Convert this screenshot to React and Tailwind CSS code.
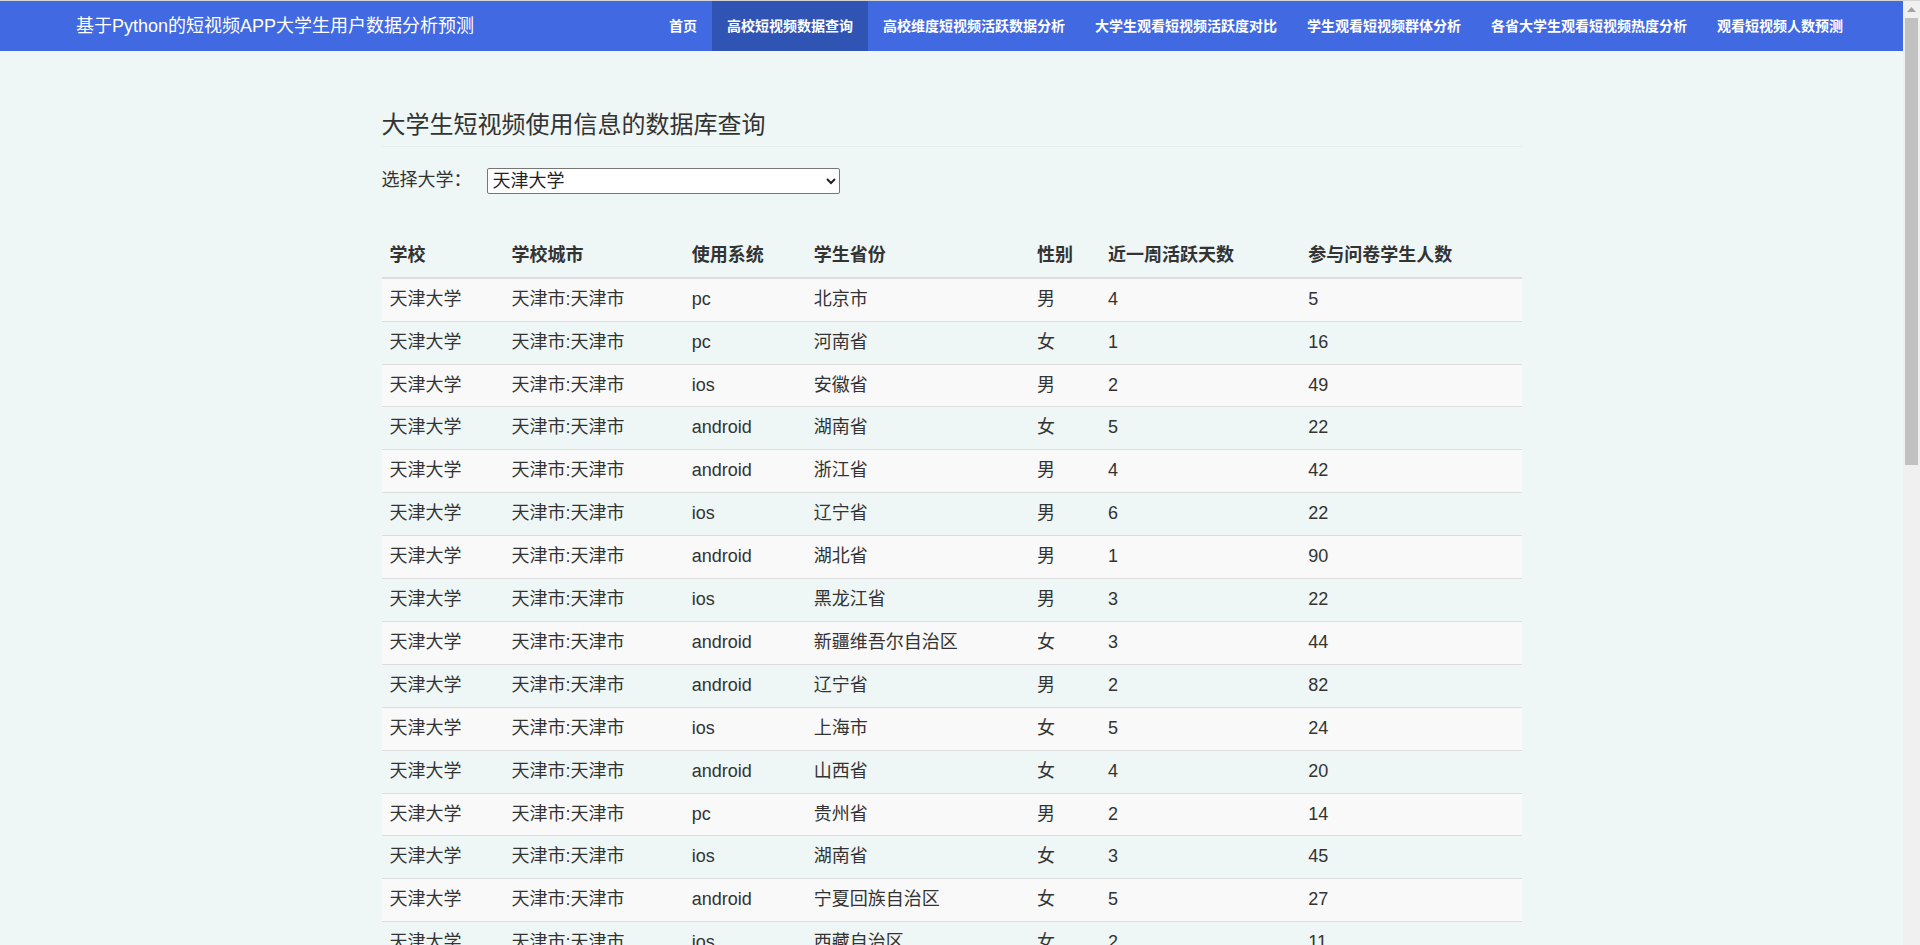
import React from 'react';

const navItems = [
  '首页',
  '高校短视频数据查询',
  '高校维度短视频活跃数据分析',
  '大学生观看短视频活跃度对比',
  '学生观看短视频群体分析',
  '各省大学生观看短视频热度分析',
  '观看短视频人数预测',
];

const rows = [
  ['pc', '北京市', '男', 4, 5],
  ['pc', '河南省', '女', 1, 16],
  ['ios', '安徽省', '男', 2, 49],
  ['android', '湖南省', '女', 5, 22],
  ['android', '浙江省', '男', 4, 42],
  ['ios', '辽宁省', '男', 6, 22],
  ['android', '湖北省', '男', 1, 90],
  ['ios', '黑龙江省', '男', 3, 22],
  ['android', '新疆维吾尔自治区', '女', 3, 44],
  ['android', '辽宁省', '男', 2, 82],
  ['ios', '上海市', '女', 5, 24],
  ['android', '山西省', '女', 4, 20],
  ['pc', '贵州省', '男', 2, 14],
  ['ios', '湖南省', '女', 3, 45],
  ['android', '宁夏回族自治区', '女', 5, 27],
  ['ios', '西藏自治区', '女', 2, 11],
];

const headers = [
  ['学校', 'w-[122px]'],
  ['学校城市', 'w-[180px]'],
  ['使用系统', 'w-[122px]'],
  ['学生省份', 'w-[223px]'],
  ['性别', 'w-[71px]'],
  ['近一周活跃天数', 'w-[200px]'],
  ['参与问卷学生人数', 'w-[221px]'],
];

function Navbar() {
  return (
    <nav className="flex h-[50px] items-stretch justify-between bg-[#4169e1] pl-[61px] pr-[45px] text-white">
      <a className="px-[15px] py-[15px] text-[18px] leading-[20px]">基于Python的短视频APP大学生用户数据分析预测</a>
      <ul className="flex">
        {navItems.map((item, i) => (
          <li key={item}>
            <a
              className={
                'block px-[15px] py-[15px] text-[14px] font-bold leading-[20px] ' +
                (i === 1 ? 'bg-[#3054b4]' : '')
              }
            >
              {item}
            </a>
          </li>
        ))}
      </ul>
    </nav>
  );
}

function Scrollbar() {
  return (
    <div className="flex w-[17px] shrink-0 flex-col items-center bg-[#f0f0f0]">
      <div className="flex h-[17px] w-full items-center justify-center">
        <svg width="9" height="5" viewBox="0 0 9 5">
          <path d="M0 5 L4.5 0 L9 5 Z" fill="#a3a3a3" />
        </svg>
      </div>
      <div className="h-[447px] w-[13px] bg-[#c1c1c1]" />
    </div>
  );
}

export default function App() {
  return (
    <div
      className="flex h-screen overflow-hidden border-t border-[#d4d4d4] bg-[#eef7f5] text-[18px] leading-[1.42857] text-[#333]"
      style={{ fontFamily: '"Liberation Sans", "Noto Sans CJK SC", sans-serif' }}
    >
      <div className="min-w-0 flex-1">
        <Navbar />

        <div className="mx-auto w-[1170px] px-[15px] pb-[20px] pt-[61px]">
          {/* page header */}
          <div className="border-b border-[#e6eeec] pb-[8px]">
            <h3 className="text-[24px] leading-[26px]">大学生短视频使用信息的数据库查询</h3>
          </div>

          <div className="mt-[21px] flex items-center">
            <label className="w-[105px]">选择大学：</label>
            <select className="h-[26px] w-[353px] rounded-[2px] border border-[#767676] bg-white pl-[1px] text-[18px] leading-[22px] text-[#222]">
              <option>天津大学</option>
              <option>北京大学</option>
              <option>清华大学</option>
            </select>
          </div>

          <table className="mt-[41px] w-full table-fixed border-collapse">
            <thead>
              <tr>
                {headers.map(([h, w]) => (
                  <th key={h} className={w + ' border-b-2 border-[#ddd] p-[8px] text-left align-bottom font-bold'}>
                    {h}
                  </th>
                ))}
              </tr>
            </thead>
            <tbody>
              {rows.map((r, i) => (
                <tr key={i} className={i % 2 === 0 ? 'bg-[#f9f9f9]' : ''}>
                  <td className="border-t border-[#ddd] p-[8px] leading-[25.9px]">天津大学</td>
                  <td className="border-t border-[#ddd] p-[8px] leading-[25.9px]">天津市:天津市</td>
                  <td className="border-t border-[#ddd] p-[8px] leading-[25.9px]">{r[0]}</td>
                  <td className="border-t border-[#ddd] p-[8px] leading-[25.9px]">{r[1]}</td>
                  <td className="border-t border-[#ddd] p-[8px] leading-[25.9px]">{r[2]}</td>
                  <td className="border-t border-[#ddd] p-[8px] leading-[25.9px]">{r[3]}</td>
                  <td className="border-t border-[#ddd] p-[8px] leading-[25.9px]">{r[4]}</td>
                </tr>
              ))}
            </tbody>
          </table>
        </div>
      </div>

      <Scrollbar />
    </div>
  );
}
